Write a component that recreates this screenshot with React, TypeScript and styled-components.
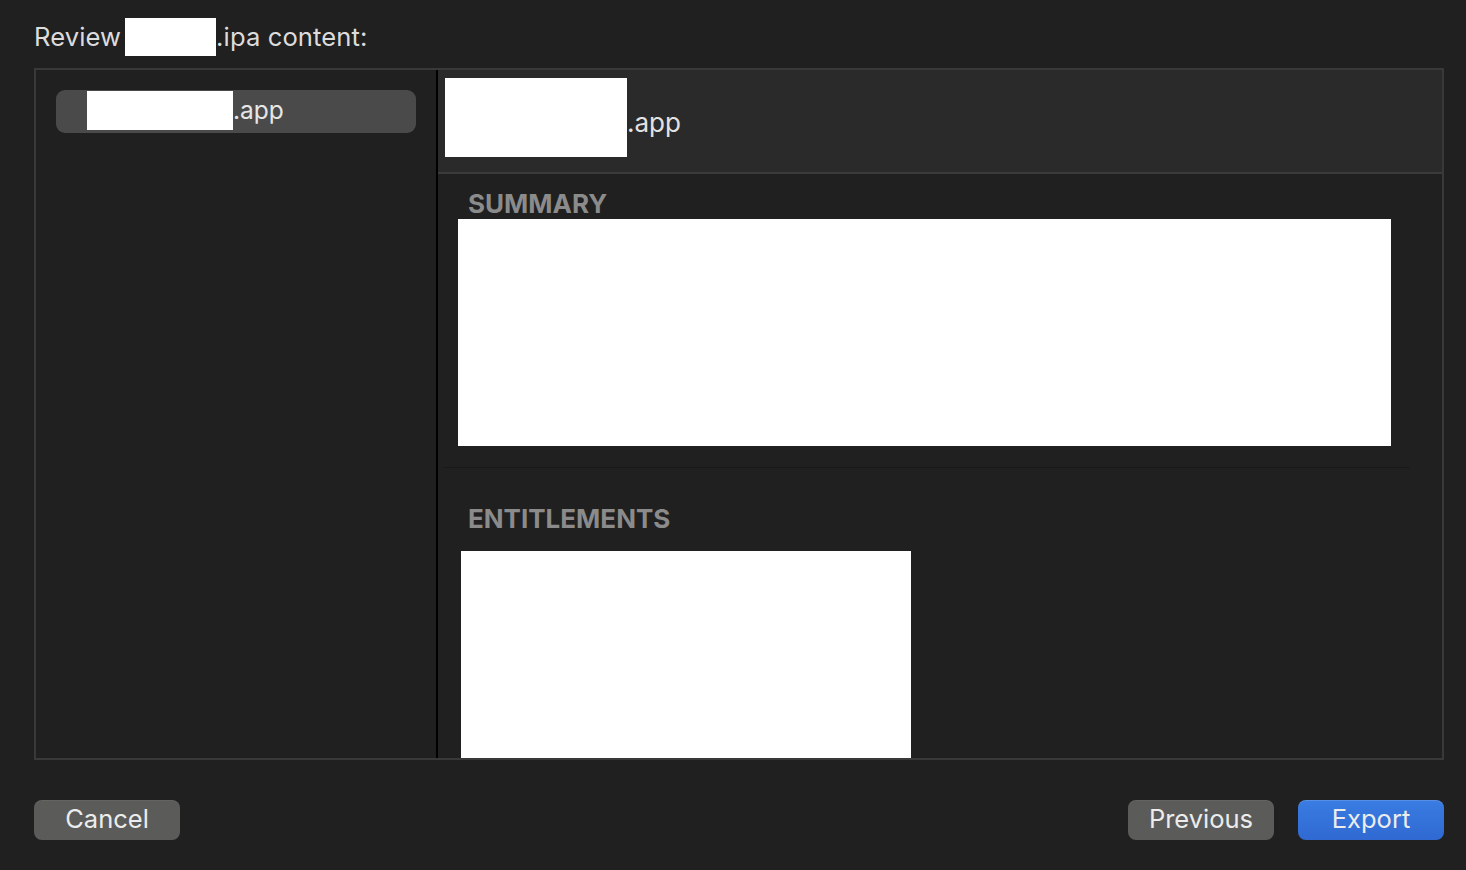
import React from "react";
import styled, { createGlobalStyle } from "styled-components";

const Global = createGlobalStyle`
  html, body { margin: 0; padding: 0; background: #202020; }
  * { box-sizing: border-box; }
  body { font-family: Inter, "Noto Sans", "Liberation Sans", sans-serif; }
`;

const Window = styled.div`
  width: 1466px;
  height: 870px;
  background: #202020;
  display: flex;
  flex-direction: column;
  padding: 18px 22px 0 34px;
  color: #dedede;
`;

const Title = styled.div`
  display: flex;
  align-items: center;
  height: 38px;
  font-size: 25.6px;
  line-height: 36px;
  letter-spacing: 0.1px;
  color: #dcdcdc;
`;

const Redacted = styled.span<{ $w: number; $h: number }>`
  display: inline-block;
  width: ${(p) => p.$w}px;
  height: ${(p) => p.$h}px;
  background: #ffffff;
  flex: none;
`;

const TitleWord = styled.span`
  margin-right: 4px;
`;

const Frame = styled.div`
  margin-top: 12px;
  height: 692px;
  border: 2px solid #393939;
  display: flex;
`;

const Sidebar = styled.div`
  width: 402px;
  flex: none;
  border-right: 2px solid #000;
  padding: 20px 20px;
`;

const SidebarRow = styled.div`
  height: 43px;
  border-radius: 9px;
  background: #4a4a4a;
  display: flex;
  align-items: flex-start;
  padding: 1px 0 0 31px;
  font-size: 24.5px;
  color: #e6e6e6;
`;

const RowText = styled.span`
  line-height: 38px;
`;

const Detail = styled.div`
  flex: 1;
  display: flex;
  flex-direction: column;
  overflow: hidden;
`;

const Header = styled.div`
  height: 104px;
  flex: none;
  background: #2a2a2a;
  border-bottom: 2px solid #3b3b3b;
  display: flex;
  align-items: flex-start;
  padding: 8px 0 0 7px;
  font-size: 26px;
  color: #e2e2e2;
`;

const HeaderText = styled.span`
  margin-top: 30px;
  line-height: 30px;
`;

const Section = styled.div<{ $pt: number }>`
  display: flex;
  flex-direction: column;
  padding-top: ${(p) => p.$pt}px;
`;

const SectionLabel = styled.div`
  font-size: 26px;
  font-weight: 700;
  color: #8b8b8b;
  line-height: 30px;
  padding-left: 30px;
`;

const Block = styled.div<{ $w: number; $h: number; $ml: number; $mt: number }>`
  width: ${(p) => p.$w}px;
  height: ${(p) => p.$h}px;
  margin-left: ${(p) => p.$ml}px;
  margin-top: ${(p) => p.$mt}px;
  background: #ffffff;
  flex: none;
`;

const Separator = styled.div`
  height: 1px;
  background: #191919;
  margin: 21px 32px 0 6px;
`;

const Footer = styled.div`
  display: flex;
  align-items: center;
  margin-top: 40px;
  gap: 24px;
`;

const Spacer = styled.div`
  flex: 1;
`;

const Button = styled.button<{ $primary?: boolean }>`
  width: 146px;
  height: 40px;
  border: none;
  border-radius: 8px;
  font-family: inherit;
  font-size: 25.5px;
  line-height: 38px;
  color: #ececec;
  padding: 0 0 2px;
  background: ${(p) =>
    p.$primary ? "linear-gradient(#3a7de2, #2f69d1)" : "#5b5c5a"};
  box-shadow: ${(p) =>
    p.$primary
      ? "inset 0 1px 0 rgba(255,255,255,0.15)"
      : "inset 0 1px 0 rgba(255,255,255,0.06)"};
`;

export default function App() {
  return (
    <>
      <Global />
      <Window>
        <Title>
          <TitleWord>Review</TitleWord>
          <Redacted $w={91} $h={38} />
          <span>.ipa content:</span>
        </Title>
        <Frame>
          <Sidebar>
            <SidebarRow>
              <Redacted $w={146} $h={39} />
              <RowText>.app</RowText>
            </SidebarRow>
          </Sidebar>
          <Detail>
            <Header>
              <Redacted $w={182} $h={79} />
              <HeaderText>.app</HeaderText>
            </Header>
            <Section $pt={15}>
              <SectionLabel>SUMMARY</SectionLabel>
              <Block $w={933} $h={227} $ml={20} $mt={0} />
              <Separator />
            </Section>
            <Section $pt={36}>
              <SectionLabel>ENTITLEMENTS</SectionLabel>
              <Block $w={450} $h={207} $ml={23} $mt={17} />
            </Section>
          </Detail>
        </Frame>
        <Footer>
          <Button>Cancel</Button>
          <Spacer />
          <Button>Previous</Button>
          <Button $primary>Export</Button>
        </Footer>
      </Window>
    </>
  );
}
